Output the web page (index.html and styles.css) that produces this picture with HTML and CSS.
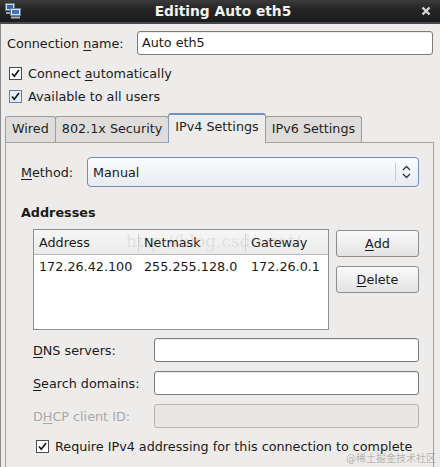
FILE: index.html
```html
<!DOCTYPE html>
<html>
<head>
<meta charset="utf-8">
<link rel="stylesheet" href="styles.css">
</head>
<body>
<div class="window">
  <div class="titlebar">
    <svg class="appicon" width="16" height="16" viewBox="0 0 16 16">
      <rect x="0.5" y="0.5" width="9" height="7" fill="#cfd6e0" stroke="#6d7d90"/>
      <rect x="2" y="2" width="6" height="4" fill="#2f63b7"/>
      <rect x="1" y="9" width="6" height="2" fill="#9aa4b0"/>
      <rect x="5.5" y="5.5" width="10" height="7" fill="#dfe5ec" stroke="#6d7d90"/>
      <rect x="7" y="7" width="7" height="4" fill="#3a73c8"/>
      <rect x="6" y="13.5" width="9" height="2" fill="#aab3bd"/>
    </svg>
    <div class="title">Editing Auto eth5</div>
    <svg class="close" width="10" height="10" viewBox="0 0 10 10">
      <path d="M1.5 1.5 L8.5 8.5 M8.5 1.5 L1.5 8.5" stroke="#d8d8d8" stroke-width="2.4"/>
    </svg>
  </div>

  <div class="content">
    <div class="name-row">
      <label class="name-label">Connection <u>n</u>ame:</label>
      <div class="entry name-entry">Auto eth5</div>
    </div>

    <div class="check-row">
      <span class="check"><svg width="13" height="13" viewBox="0 0 13 13"><rect x="0.5" y="0.5" width="12" height="12" fill="#fff" stroke="#4c4c4c"/><path d="M3 6.5 L5.3 9.2 L10 3" fill="none" stroke="#111" stroke-width="1.6"/></svg></span>
      <span>Connect <u>a</u>utomatically</span>
    </div>
    <div class="check-row">
      <span class="check"><svg width="13" height="13" viewBox="0 0 13 13"><rect x="0.5" y="0.5" width="12" height="12" fill="#e4ecf6" stroke="#5e7fae"/><path d="M3 6.5 L5.3 9.2 L10 3" fill="none" stroke="#111" stroke-width="1.6"/></svg></span>
      <span>Available to all users</span>
    </div>

    <div class="tabs">
      <div class="tab">Wired</div>
      <div class="tab">802.1x Security</div>
      <div class="tab active">IPv4 Settings</div>
      <div class="tab">IPv6 Settings</div>
    </div>

    <div class="panel">
      <div class="method-row">
        <label class="method-label"><u>M</u>ethod:</label>
        <div class="combo">
          <span class="combo-text">Manual</span>
          <span class="combo-sep"></span>
          <svg class="combo-arrow" width="9" height="14" viewBox="0 0 9 14">
            <path d="M1 5 L4.5 1.5 L8 5 M1 9 L4.5 12.5 L8 9" fill="none" stroke="#333" stroke-width="1.3"/>
          </svg>
        </div>
      </div>

      <div class="section-title">Addresses</div>

      <div class="addr-area">
        <div class="tree">
          <div class="tree-head">
            <div class="col c1">Address</div>
            <div class="col c2">Netmask</div>
            <div class="col c3">Gateway</div>
            <span class="wm-url">http://blog.csdn.net/</span>
          </div>
          <div class="tree-row">
            <div class="col c1">172.26.42.100</div>
            <div class="col c2">255.255.128.0</div>
            <div class="col c3">172.26.0.1</div>
          </div>
        </div>
        <div class="btns">
          <div class="btn"><u>A</u>dd</div>
          <div class="btn"><u>D</u>elete</div>
        </div>
      </div>

      <div class="form-row">
        <label class="form-label"><u>D</u>NS servers:</label>
        <div class="entry form-entry"></div>
      </div>
      <div class="form-row">
        <label class="form-label"><u>S</u>earch domains:</label>
        <div class="entry form-entry"></div>
      </div>
      <div class="form-row disabled">
        <label class="form-label">D<u>H</u>CP client ID:</label>
        <div class="entry form-entry off"></div>
      </div>

      <div class="check-row req">
        <span class="check"><svg width="13" height="13" viewBox="0 0 13 13"><rect x="0.5" y="0.5" width="12" height="12" fill="#fff" stroke="#4c4c4c"/><path d="M3 6.5 L5.3 9.2 L10 3" fill="none" stroke="#111" stroke-width="1.6"/></svg></span>
        <span class="nowrap">Require IPv4 addressing for this connection to complete</span>
      </div>
    </div>
  </div>
  <span class="wm-juejin">@稀土掘金技术社区</span>
</div>
</body>
</html>
```

FILE: styles.css
```css
html, body {
  margin: 0;
  padding: 0;
}
body {
  width: 440px;
  height: 467px;
  overflow: hidden;
  background: #edeceb;
  font-family: "DejaVu Sans", "Noto Sans CJK SC", sans-serif;
  font-size: 12.75px;
  color: #1a1a1a;
}
u { text-decoration: underline; text-underline-offset: 2px; }
.nowrap { white-space: nowrap; }

.window {
  position: relative;
  width: 440px;
  height: 467px;
  box-sizing: border-box;
  border-left: 1px solid #8c8c8c;
}

.titlebar {
  height: 22px;
  display: flex;
  align-items: center;
  background: linear-gradient(#3c3c3c, #262626 40%, #1c1c1c);
  border-bottom: 2px solid #3e4a57;
  padding: 0 6px 0 5px;
  margin-left: -1px;
}
.appicon { flex: none; }
.title {
  flex: 1;
  text-align: center;
  color: #f2f2f2;
  font-weight: bold;
  font-size: 13.8px;
  padding-left: 4px;
}
.close { flex: none; margin-right: 3px; }

.content {
  padding: 7px 7px 0 4px;
}

.name-row {
  display: flex;
  align-items: center;
}
.name-label {
  width: 132px;
  flex: none;
  box-sizing: border-box;
  padding-left: 2px;
}
.entry {
  box-sizing: border-box;
  height: 24px;
  background: #fff;
  border: 1px solid #7b7b7b;
  border-radius: 3px;
  box-shadow: inset 0 1px 1px rgba(0,0,0,0.08);
}
.name-entry {
  flex: 1;
  padding: 3px 4px 0 4px;
}

.check-row {
  display: flex;
  align-items: center;
  height: 23px;
  padding-left: 4px;
}
.name-row + .check-row { margin-top: 7px; }
.check {
  width: 13px;
  height: 13px;
  margin-right: 6px;
  display: inline-flex;
  flex: none;
}

.tabs {
  display: flex;
  align-items: flex-end;
  margin-top: 5px;
  height: 29px;
  position: relative;
  z-index: 1;
}
.tab {
  box-sizing: border-box;
  height: 26px;
  padding: 4px 6px 0 6px;
  background: #dedddb;
  border: 1px solid #9c9c9c;
  border-bottom: none;
  border-radius: 3px 3px 0 0;
  margin-right: -1px;
  color: #1e1e1e;
}
.tab.active {
  height: 30px;
  margin-bottom: -1px;
  background: #edeceb;
  border-color: #8a9cb8;
  border-top: 2px solid #6f91c4;
  padding-top: 4px;
}

.panel {
  box-sizing: border-box;
  width: 429px;
  height: 340px;
  border: 1px solid #a3a3a3;
  border-bottom: none;
  padding: 14px 14px 0 15px;
  background: #edeceb;
}

.method-row {
  display: flex;
  align-items: center;
}
.method-label { width: 66px; flex: none; }
.combo {
  flex: 1;
  box-sizing: border-box;
  height: 30px;
  display: flex;
  align-items: center;
  border: 1px solid #6e8ebd;
  border-radius: 4px;
  background: linear-gradient(#fbfcfd, #e7ebf0);
  padding-left: 5px;
}
.combo-text { flex: 1; }
.combo-sep {
  width: 1px;
  height: 18px;
  background: #c8ccd2;
  margin-right: 6px;
}
.combo-arrow { margin-right: 7px; }

.section-title {
  font-weight: bold;
  margin-top: 18px;
  line-height: 16px;
}

.addr-area {
  display: flex;
  margin-top: 8px;
  padding-left: 12px;
}
.tree {
  position: relative;
  box-sizing: border-box;
  width: 296px;
  height: 101px;
  border: 1px solid #8f8f8f;
  background: #fff;
}
.tree-head {
  position: relative;
  display: flex;
  height: 24px;
  align-items: center;
  background: linear-gradient(#f7f7f7, #ebebeb);
  border-bottom: 1px solid #b9b9b9;
}
.tree-head .col { border-right: 1px solid #d2d2d2; height: 17px; line-height: 17px; }
.tree-head .c3 { border-right: none; }
.col { box-sizing: border-box; padding-left: 5px; }
.c1 { width: 105px; }
.c2 { width: 107px; }
.c3 { flex: 1; }
.tree-row {
  display: flex;
  height: 22px;
  align-items: center;
}
.wm-url {
  position: absolute;
  left: 92px;
  top: 1px;
  font-family: "DejaVu Serif", serif;
  font-size: 17px;
  color: rgba(150,150,150,0.2);
  white-space: nowrap;
  pointer-events: none;
}

.btns {
  display: flex;
  flex-direction: column;
  gap: 9px;
  margin-left: 7px;
  padding-top: 1px;
  flex: 1;
}
.btn {
  box-sizing: border-box;
  height: 27px;
  display: flex;
  align-items: center;
  justify-content: center;
  border: 1px solid #8e8e8e;
  border-radius: 3px;
  background: linear-gradient(#fafafa, #e3e3e3);
}

.form-row {
  display: flex;
  align-items: center;
  padding-left: 12px;
  margin-top: 9px;
}
.addr-area + .form-row { margin-top: 8px; }
.form-label { width: 121px; flex: none; }
.form-entry { flex: 1; }
.form-row.disabled { color: #a9a9a9; }
.form-entry.off {
  background: #e8e7e6;
  border-color: #b3b3b3;
  box-shadow: none;
}

.check-row.req {
  margin-top: 7px;
  padding-left: 15px;
}

.wm-juejin {
  position: absolute;
  right: 4px;
  bottom: 2px;
  font-size: 10px;
  color: rgba(130,130,130,0.55);
  white-space: nowrap;
}
```
